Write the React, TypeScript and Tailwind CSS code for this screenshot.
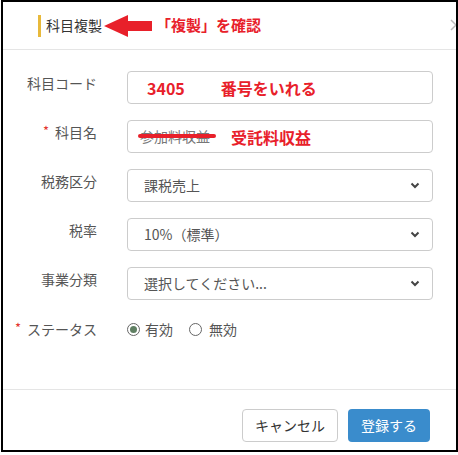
import React from "react";

const font = { fontFamily: '"Noto Sans CJK JP", "Noto Sans", sans-serif' };

function Chevron() {
  return (
    <svg width="10" height="7" viewBox="0 0 10 7" className="shrink-0">
      <path d="M1.5 1.5 L5 5 L8.5 1.5" fill="none" stroke="#444" strokeWidth="2" />
    </svg>
  );
}

function Star() {
  return <span className="relative top-[-2px] text-[#e3342f] text-[13px] mr-[6px]">*</span>;
}

function Row({ label, required, children }: { label: string; required?: boolean; children: React.ReactNode }) {
  return (
    <div className="flex items-start mb-[16px]">
      <div className="w-[94px] shrink-0 text-right pt-[2px] text-[14px] text-[#555] leading-[20px]">
        {required && <Star />}
        {label}
      </div>
      <div className="ml-[30px] flex-1">{children}</div>
    </div>
  );
}

function Select({ value }: { value: string }) {
  return (
    <div className="h-[33px] border border-[#ccc] rounded-[4px] flex items-center pl-[16px] pr-[12px] text-[14px] text-[#555]">
      <span className="flex-1">{value}</span>
      <Chevron />
    </div>
  );
}

export default function App() {
  return (
    <div className="w-[458px] h-[455px] bg-white overflow-hidden" style={font}>
      <div className="ml-[1px] w-[457px] h-[452px] border-2 border-black flex flex-col relative overflow-hidden">
        {/* ヘッダー */}
        <div className="h-[48px] border-b border-[#e5e5e5] flex items-center pl-[35px]">
          <div className="w-[3px] h-[22px] bg-[#e8b93b]" />
          <span className="ml-[5px] text-[14px] text-[#333]">科目複製</span>
          <svg width="48" height="22" viewBox="0 0 48 22" className="ml-[2px]">
            <path d="M0 11 L24 0 L24 6 L48 6 L48 16 L24 16 L24 22 Z" fill="#e8202a" />
          </svg>
          <span className="ml-[4px] text-[15px] font-bold text-[#e8202a]">「複製」を確認</span>
          {/* 閉じるボタン（右端で切れている） */}
          <svg width="12" height="12" viewBox="0 0 12 12" className="absolute right-[-6px] top-[17px]">
            <path d="M1 1 L11 11 M11 1 L1 11" stroke="#bbb" strokeWidth="1.5" />
          </svg>
        </div>

        {/* 本文 */}
        <div className="flex-1 pt-[21px] pr-[23px]">
          <Row label="科目コード">
            <div className="h-[33px] border border-[#ccc] rounded-[4px] flex items-center pl-[19px] text-[16px] font-bold text-[#e8202a]">
              <span>3405</span>
              <span className="ml-[36px]">番号をいれる</span>
            </div>
          </Row>
          <Row label="科目名" required>
            <div className="h-[33px] border border-[#ccc] rounded-[4px] flex items-center pl-[12px]">
              <span className="relative text-[14px] text-[#777]">
                参加料収益
                <span className="absolute left-[-2px] right-[-6px] top-[8px] h-[4px] rounded-full bg-[#e8202a]" />
              </span>
              <span className="ml-[21px] text-[16px] font-bold text-[#e8202a]">受託料収益</span>
            </div>
          </Row>
          <Row label="税務区分">
            <Select value="課税売上" />
          </Row>
          <Row label="税率">
            <Select value="10%（標準）" />
          </Row>
          <Row label="事業分類">
            <Select value="選択してください..." />
          </Row>
          <div className="flex items-center mt-[19px]">
            <div className="w-[94px] shrink-0 text-right text-[14px] text-[#555]">
              <Star />
              ステータス
            </div>
            <div className="ml-[30px] flex items-center text-[14px] text-[#555]">
              <span className="w-[13px] h-[13px] rounded-full border border-[#666] flex items-center justify-center">
                <span className="w-[7px] h-[7px] rounded-full bg-[#5f7f62]" />
              </span>
              <span className="ml-[5px]">有効</span>
              <span className="ml-[16px] w-[13px] h-[13px] rounded-full border border-[#666]" />
              <span className="ml-[7px]">無効</span>
            </div>
          </div>
        </div>

        {/* フッター */}
        <div className="h-[61px] border-t border-[#e5e5e5] flex items-start justify-end pt-[19px] pr-[26px] gap-[10px]">
          <button className="h-[33px] w-[96px] border border-[#ccc] rounded-[4px] bg-white text-[14px] text-[#333]">
            キャンセル
          </button>
          <button className="h-[33px] w-[82px] rounded-[4px] bg-[#3a8ccc] text-[14px] text-white">
            登録する
          </button>
        </div>
      </div>
    </div>
  );
}
